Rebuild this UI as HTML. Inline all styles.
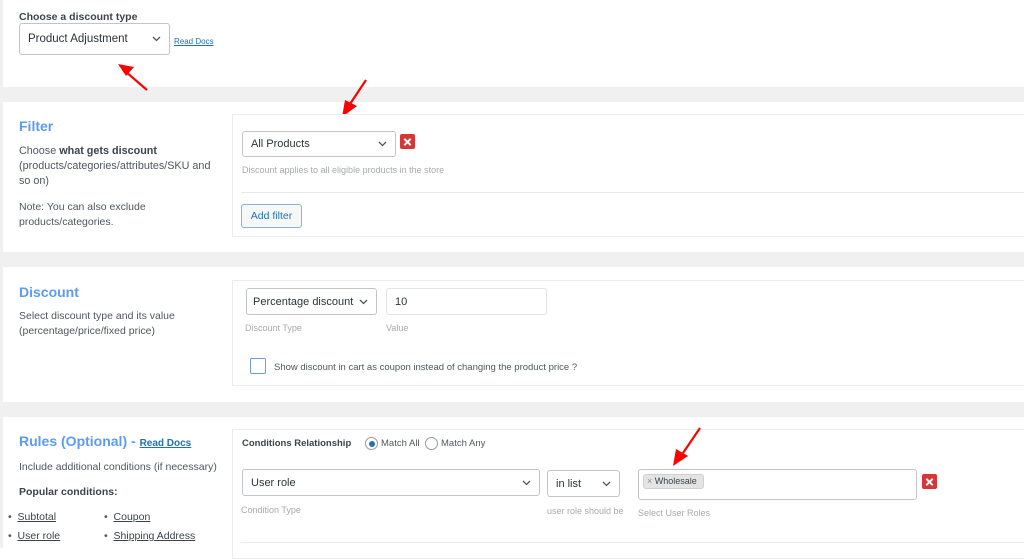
<!DOCTYPE html>
<html><head><meta charset="utf-8"><style>
*{box-sizing:border-box;margin:0;padding:0}
body{width:1024px;height:548px;overflow:hidden;background:#fff;font-family:"Liberation Sans",sans-serif;color:#3c434a;position:relative}
.a{position:absolute}
.band{position:absolute;left:0;width:1024px;height:15px;background:#f0f0f0}
.panel{position:absolute;left:232px;width:800px;border:1px solid #ececec;background:#fff}
.sel{position:absolute;border:1px solid #c3c4c7;border-radius:3px;background:#fff;font-size:12px;color:#2c3338;padding-left:8px;display:flex;align-items:center}
.sel svg{position:absolute;right:8px;top:50%;margin-top:-3px}
.h{color:#5b9cf0;font-size:14px;font-weight:bold}
.t{font-size:10.5px;color:#50575e;line-height:15px}
.hint{font-size:9px;color:#a7aaad}
.x{position:absolute;width:15px;height:15px;background:#d63638;border-radius:2px}
.x:before,.x:after{content:"";position:absolute;left:3px;top:6.5px;width:9px;height:2px;background:#fff;transform:rotate(45deg)}
.x:after{transform:rotate(-45deg)}
u{color:#3c434a}
</style></head><body>
<div class="a" style="left:0;top:0;width:3px;height:548px;background:#f0f0f0"></div>
<div class="band" style="top:87px"></div>
<div class="band" style="top:252px"></div>
<div class="band" style="top:402px"></div>

<div class="a" style="left:19px;top:11px;font-size:10.5px;font-weight:bold;color:#3c434a">Choose a discount type</div>
<div class="sel" style="left:19px;top:23px;width:151px;height:32px;font-size:11.5px">Product Adjustment<svg width="9" height="6"><path d="M1 1l3.5 3.5L8 1" stroke="#50575e" stroke-width="1.3" fill="none"/></svg></div>
<div class="a" style="left:174px;top:37px;font-size:8px;color:#2271b1;text-decoration:underline">Read Docs</div>
<svg class="a" style="left:112px;top:58px" width="40" height="34"><path d="M35 32L14 14" stroke="#f00" stroke-width="2.2"/><path d="M6 6l16 3-8 9z" fill="#f00"/></svg>
<svg class="a" style="left:336px;top:76px" width="34" height="44"><path d="M30 4L14 28" stroke="#f00" stroke-width="2.2"/><path d="M6 41l3-17 12 6z" fill="#f00"/></svg>

<div class="a h" style="left:19px;top:118px">Filter</div>
<div class="a t" style="left:19px;top:144px;width:200px;font-size:10.8px">Choose <b style="color:#3c434a">what gets discount</b> (products/categories/attributes/SKU and so on)</div>
<div class="a t" style="left:19px;top:200px;width:205px">Note: You can also exclude products/categories.</div>
<div class="panel" style="top:114px;height:123px"></div>
<div class="sel" style="left:242px;top:131px;width:154px;height:26px;font-size:11px">All Products<svg width="9" height="6"><path d="M1 1l3.5 3.5L8 1" stroke="#50575e" stroke-width="1.3" fill="none"/></svg></div>
<div class="x" style="left:400px;top:134px"></div>
<div class="a hint" style="left:242px;top:165px">Discount applies to all eligible products in the store</div>
<div class="a" style="left:241px;top:192px;width:783px;height:1px;background:#e8e8e8"></div>
<div class="a" style="left:241px;top:204px;width:61px;height:24px;border:1px solid #8ab4d8;border-radius:3px;background:#f6f7f7;color:#2271b1;font-size:10.5px;text-align:center;line-height:22px">Add filter</div>

<div class="a h" style="left:19px;top:284px">Discount</div>
<div class="a t" style="left:19px;top:309px;width:205px">Select discount type and its value (percentage/price/fixed price)</div>
<div class="panel" style="top:280px;height:106px"></div>
<div class="sel" style="left:246px;top:288px;width:131px;height:27px;font-size:11px;padding-left:6px">Percentage discount<svg width="9" height="6"><path d="M1 1l3.5 3.5L8 1" stroke="#50575e" stroke-width="1.3" fill="none"/></svg></div>
<div class="sel" style="left:386px;top:288px;width:161px;height:27px;font-size:11px;border-color:#e4e4e4">10</div>
<div class="a hint" style="left:245px;top:323px">Discount Type</div>
<div class="a hint" style="left:386px;top:323px">Value</div>
<div class="a" style="left:250px;top:358px;width:16px;height:16px;border:1.5px solid #6f9ae8;border-radius:2px"></div>
<div class="a" style="left:274px;top:362px;font-size:9.5px;color:#50575e">Show discount in cart as coupon instead of changing the product price ?</div>

<div class="a h" style="left:19px;top:433px">Rules (Optional) - <span style="font-size:10px;color:#2271b1;text-decoration:underline">Read Docs</span></div>
<div class="a t" style="left:19px;top:460px">Include additional conditions (if necessary)</div>
<div class="a t" style="left:19px;top:485px;font-weight:bold;color:#3c434a">Popular conditions:</div>
<div class="a t" style="left:8px;top:510px">•&nbsp; <u>Subtotal</u></div>
<div class="a t" style="left:104px;top:510px">•&nbsp; <u>Coupon</u></div>
<div class="a t" style="left:8px;top:529px">•&nbsp; <u>User role</u></div>
<div class="a t" style="left:104px;top:529px">•&nbsp; <u>Shipping Address</u></div>
<div class="panel" style="top:429px;height:130px"></div>
<div class="a" style="left:242px;top:438px;font-size:9.5px;font-weight:bold;color:#3c434a">Conditions Relationship</div>
<div class="a" style="left:365px;top:437px;width:13px;height:13px;border:1px solid #999;border-radius:50%;background:#fff"><div style="margin:2.5px;width:6px;height:6px;border-radius:50%;background:#2271b1"></div></div>
<div class="a" style="left:381px;top:438px;font-size:9.5px;color:#50575e">Match All</div>
<div class="a" style="left:425px;top:437px;width:13px;height:13px;border:1px solid #999;border-radius:50%"></div>
<div class="a" style="left:441px;top:438px;font-size:9.5px;color:#50575e">Match Any</div>
<div class="sel" style="left:242px;top:469px;width:298px;height:27px;font-size:11px">User role<svg width="9" height="6"><path d="M1 1l3.5 3.5L8 1" stroke="#50575e" stroke-width="1.3" fill="none"/></svg></div>
<div class="sel" style="left:547px;top:470px;width:73px;height:27px;font-size:11px">in list<svg width="9" height="6"><path d="M1 1l3.5 3.5L8 1" stroke="#50575e" stroke-width="1.3" fill="none"/></svg></div>
<div class="a hint" style="left:241px;top:505px">Condition Type</div>
<div class="a hint" style="left:547px;top:506px">user role should be</div>
<div class="a" style="left:638px;top:469px;width:279px;height:31px;border:1px solid #c3c4c7;border-radius:3px"></div>
<div class="a" style="left:643px;top:474px;width:61px;height:15px;background:#e4e4e4;border:1px solid #d0d0d0;border-radius:3px;font-size:9px;color:#3c434a;line-height:13px;padding-left:3px"><span style="color:#888">×</span> Wholesale</div>
<div class="a hint" style="left:638px;top:508px">Select User Roles</div>
<div class="x" style="left:922px;top:474px"></div>
<svg class="a" style="left:668px;top:425px" width="36" height="44"><path d="M32 3L15 28" stroke="#f00" stroke-width="2.2"/><path d="M5 41l3-17 12 7z" fill="#f00"/></svg>
<div class="a" style="left:241px;top:542px;width:783px;height:1px;background:#e8e8e8"></div>
</body></html>
